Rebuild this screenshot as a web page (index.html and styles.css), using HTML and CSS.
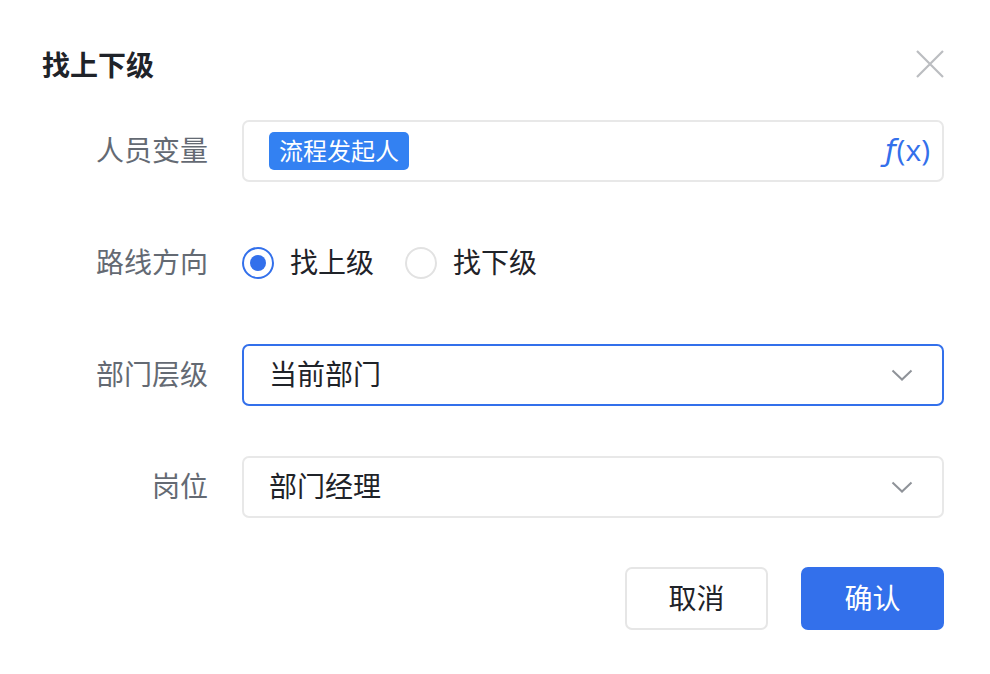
FILE: index.html
```html
<!DOCTYPE html>
<html lang="zh-CN">
  <head>
    <meta charset="UTF-8" />
    <title>找上下级</title>
    <link rel="stylesheet" href="styles.css">
  </head>
  <body>
    <div class="dialog">
      <div class="dialog-header">
        <h1 class="dialog-title">找上下级</h1>
        <svg class="close-icon" width="30" height="30" viewBox="0 0 30 30">
          <path d="M2 2L28 28M28 2L2 28" stroke="#bbbdc1" stroke-width="2.2" fill="none" />
        </svg>
      </div>

      <div class="form">
        <label class="form-label">人员变量</label>
        <div class="field">
          <span class="tag">流程发起人</span>
          <span class="fx"><i>ƒ</i>(x)</span>
        </div>

        <label class="form-label">路线方向</label>
        <div class="radio-group">
          <span class="radio checked"><span class="radio-circle"></span>找上级</span>
          <span class="radio"><span class="radio-circle"></span>找下级</span>
        </div>

        <label class="form-label">部门层级</label>
        <div class="field select active">
          <span class="value">当前部门</span>
          <svg class="chevron" width="22" height="14" viewBox="0 0 22 14">
            <path d="M1.5 2.5L11 11.5L20.5 2.5" stroke="#8f9399" stroke-width="2" fill="none" />
          </svg>
        </div>

        <label class="form-label">岗位</label>
        <div class="field select">
          <span class="value">部门经理</span>
          <svg class="chevron" width="22" height="14" viewBox="0 0 22 14">
            <path d="M1.5 2.5L11 11.5L20.5 2.5" stroke="#8f9399" stroke-width="2" fill="none" />
          </svg>
        </div>
      </div>

      <div class="dialog-footer">
        <button class="btn">取消</button>
        <button class="btn btn-primary">确认</button>
      </div>
    </div>
  </body>
</html>
```

FILE: styles.css
```css
* {
  box-sizing: border-box;
}
body {
  margin: 0;
  background: #ffffff;
  font-family: "Noto Sans CJK SC", "Noto Sans", sans-serif;
  color: #1f2329;
}
.dialog {
  width: 990px;
  padding: 36px 46px 0 42px;
}
.dialog-header {
  height: 56px;
  display: flex;
  align-items: center;
  justify-content: space-between;
}
.dialog-title {
  margin: 0;
  font-size: 28px;
  font-weight: 600;
  color: #1f2329;
}
.close-icon {
  margin-right: -1px;
}
.form {
  margin-top: 28px;
  display: grid;
  grid-template-columns: 166px 1fr;
  column-gap: 34px;
  row-gap: 50px;
  grid-auto-rows: 62px;
}
.form-label {
  display: flex;
  align-items: center;
  justify-content: flex-end;
  padding-bottom: 4px;
  font-size: 28px;
  color: #646a73;
}
.field {
  display: flex;
  align-items: center;
  justify-content: space-between;
  border: 2px solid #e8e8e8;
  border-radius: 7px;
  padding: 0 12px 0 25px;
  font-size: 28px;
  color: #1f2329;
}
.field .value {
  padding-bottom: 4px;
}
.field.select {
  padding-right: 29px;
}
.field.active {
  border-color: #3370eb;
}
.tag {
  height: 38px;
  line-height: 36px;
  padding: 0 10px;
  border-radius: 5px;
  background: #3381f2;
  color: #ffffff;
  font-size: 24px;
}
.fx {
  font-family: "Open Sans", sans-serif;
  font-size: 30px;
  color: #3370eb;
  padding-bottom: 3px;
}
.fx i {
  font-family: "DejaVu Sans", sans-serif;
  font-style: italic;
  margin-right: 1px;
}
.radio-group {
  display: flex;
  align-items: center;
  gap: 31px;
}
.radio {
  display: flex;
  align-items: center;
  gap: 16px;
  padding-bottom: 4px;
  font-size: 28px;
  color: #1f2329;
}
.radio-circle {
  width: 32px;
  height: 32px;
  border-radius: 50%;
  border: 2px solid #e2e2e2;
  display: flex;
  align-items: center;
  justify-content: center;
  margin-top: 3px;
}
.radio.checked .radio-circle {
  border-color: #3370eb;
}
.radio.checked .radio-circle::after {
  content: "";
  width: 16px;
  height: 16px;
  border-radius: 50%;
  background: #3370eb;
}
.dialog-footer {
  margin-top: 49px;
  display: flex;
  justify-content: flex-end;
  gap: 33px;
}
.btn {
  width: 143px;
  height: 63px;
  border: 2px solid #e6e6e6;
  border-radius: 7px;
  background: #ffffff;
  font-family: "Noto Sans CJK SC", sans-serif;
  font-size: 28px;
  color: #1f2329;
  padding-bottom: 4px;
}
.btn-primary {
  border-color: #3370eb;
  background: #3370eb;
  color: #ffffff;
}
```
